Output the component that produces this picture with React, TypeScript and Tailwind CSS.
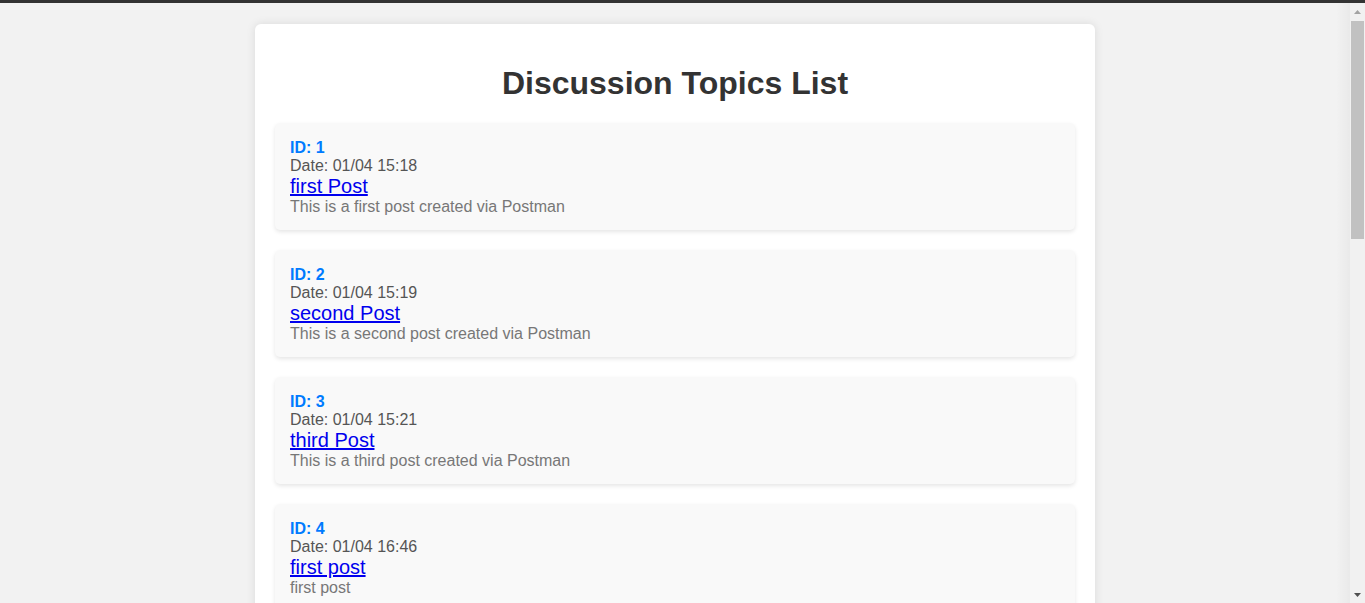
import React from "react";

type Topic = { id: number; date: string; title: string; desc: string };

const topics: Topic[] = [
  { id: 1, date: "01/04 15:18", title: "first Post", desc: "This is a first post created via Postman" },
  { id: 2, date: "01/04 15:19", title: "second Post", desc: "This is a second post created via Postman" },
  { id: 3, date: "01/04 15:21", title: "third Post", desc: "This is a third post created via Postman" },
  { id: 4, date: "01/04 16:46", title: "first post", desc: "first post" },
  { id: 5, date: "01/04 16:52", title: "second post", desc: "second post" },
  { id: 6, date: "01/04 17:03", title: "third post", desc: "third post" },
  { id: 7, date: "01/05 09:12", title: "fourth post", desc: "fourth post" },
  { id: 8, date: "01/05 10:27", title: "fifth post", desc: "fifth post" },
  { id: 9, date: "01/05 11:40", title: "sixth post", desc: "sixth post" },
  { id: 10, date: "01/05 13:05", title: "seventh post", desc: "seventh post" },
  { id: 11, date: "01/05 14:33", title: "eighth post", desc: "eighth post" },
];

function Scrollbar() {
  return (
    <div className="w-[15px] shrink-0 bg-[#f1f1f1] flex flex-col relative">
      <div className="h-[17px] flex items-center justify-center">
        <svg width="7" height="4" viewBox="0 0 7 4">
          <polygon points="3.5,0 7,4 0,4" fill="#a3a3a3" />
        </svg>
      </div>
      <div className="mx-[1px] mt-[1px] h-[218px] bg-[#c1c1c1]" />
      <div className="flex-1" />
      <div className="h-[17px] flex items-center justify-center">
        <svg width="7" height="4" viewBox="0 0 7 4">
          <polygon points="0,0 7,0 3.5,4" fill="#505050" />
        </svg>
      </div>
    </div>
  );
}

export default function App() {
  return (
    <div className="h-screen flex flex-col overflow-hidden bg-[#f2f2f2] font-['Liberation_Sans',Arial,sans-serif] leading-normal">
      <div className="h-[3px] shrink-0 bg-[#333333]" />
      <div className="flex flex-1 min-h-0">
        <div className="flex-1 overflow-hidden bg-[#f2f2f2] relative">
          <div className="pt-[21px] pb-[20px]">
            <div className="mx-auto w-[840px] bg-white rounded-[6px] shadow-[0_0_10px_rgba(0,0,0,0.1)] px-[20px] pt-[20px] pb-[20px]">
              <h1 className="text-center text-[32px] leading-[37px] font-bold text-[#333333] mt-[21px] mb-[21px]">
                Discussion Topics List
              </h1>
              <div className="flex flex-col gap-[20px]">
                {topics.map((t) => (
                  <div
                    key={t.id}
                    className="bg-[#f9f9f9] rounded-[5px] shadow-[0_2px_4px_rgba(0,0,0,0.1)] px-[15px] pt-[16px] pb-[14px]"
                  >
                    <div className="text-[16px] leading-[18px] font-bold text-[#007bff]">ID: {t.id}</div>
                    <div className="text-[16px] leading-[18px] text-[#555555]">Date: {t.date}</div>
                    <a href="#" className="block w-fit text-[20px] leading-[23px] text-[#0000ee] underline">
                      {t.title}
                    </a>
                    <div className="text-[16px] leading-[18px] text-[#777777]">{t.desc}</div>
                  </div>
                ))}
              </div>
            </div>
          </div>
          <div className="absolute top-0 right-0 h-full w-[14px] bg-gradient-to-r from-transparent to-[rgba(0,0,0,0.035)]" />
        </div>
        <Scrollbar />
      </div>
    </div>
  );
}
